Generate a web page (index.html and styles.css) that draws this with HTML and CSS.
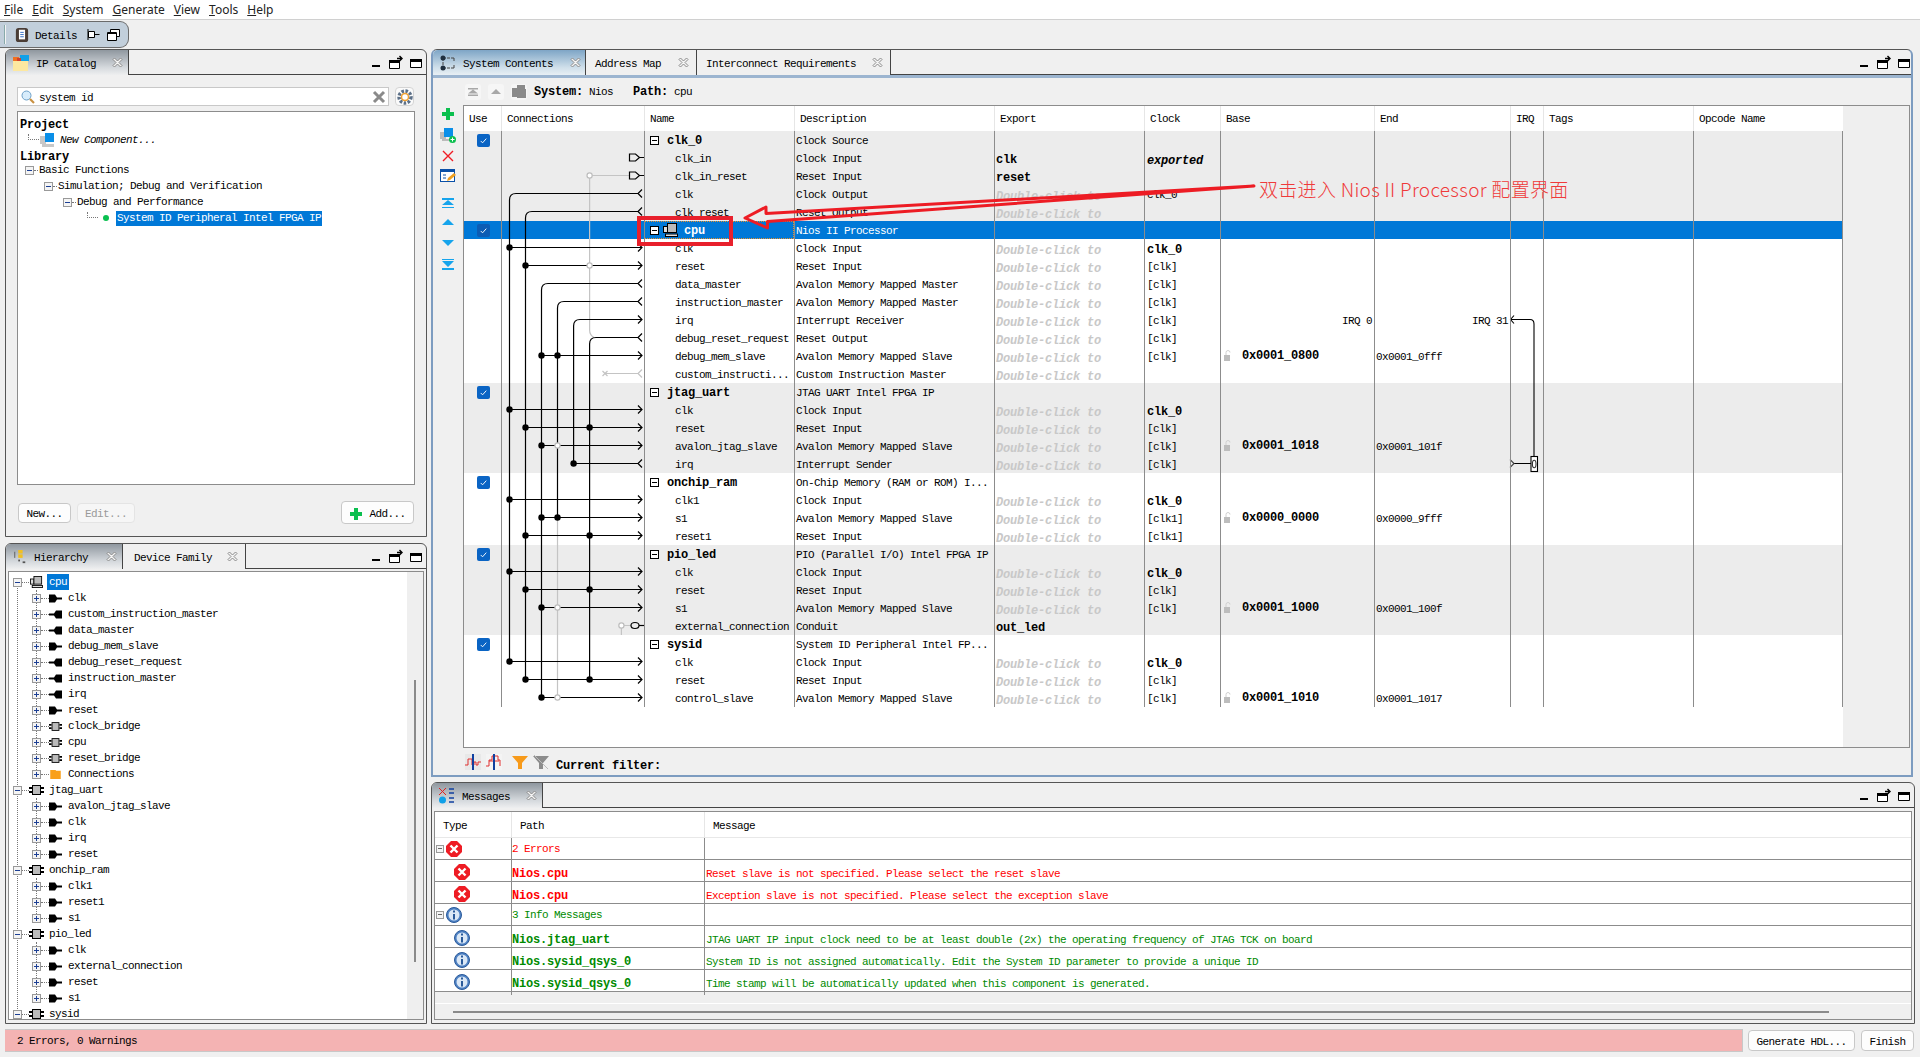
FILE: index.html
```html
<!DOCTYPE html>
<html lang="en">
<head>
<meta charset="utf-8">
<title>Platform Designer</title>
<link rel="stylesheet" href="styles.css">
</head>
<body>
<svg class="sprite" aria-hidden="true">
  <symbol id="winctl" viewBox="0 0 50 14"><rect x="0" y="10" width="8" height="2"/><path d="M17.5 6.500h10v7h-10z" fill="#fff" stroke="#000"/><rect x="17" y="5" width="11" height="3"/><path d="M25 3.500h4M27.500 1l2.500 2.500-2.500 2.500" fill="none" stroke="#000" stroke-width="1.400"/><path d="M38.500 4.500h11v8h-11z" fill="#fff" stroke="#000"/><rect x="38" y="4" width="12" height="3"/></symbol>
  <symbol id="close" viewBox="0 0 11 11"><path d="M1 2.500 2.500 1l3 3 3-3L10 2.500l-3 3 3 3L8.500 10l-3-3-3 3L1 8.500l3-3z" fill="#f4f4f4" stroke="#8a8a8a"/></symbol>
  <symbol id="pin" viewBox="0 0 13 13"><path d="M1.500 3.500h6v6h-6zM7.500 6.500h5" fill="#fff" stroke="#000"/><path d="M1 1v11" stroke="#000"/></symbol>
  <symbol id="restore" viewBox="0 0 13 13"><path d="M3.500 1.500h9v7h-9z" fill="#fff" stroke="#000"/><path d="M.5 4.500h9v8h-9z" fill="#fff" stroke="#000"/><path d="M1 5h8" stroke="#000" stroke-width="2"/></symbol>
  <symbol id="details" viewBox="0 0 14 16"><rect x="0" y="0" width="14" height="16" rx="3" fill="#4a3d36"/><rect x="3.500" y="2" width="7" height="11" fill="#fff"/><path d="M5 5h4M5 7.500h4M5 10h4" stroke="#2060c0"/></symbol>
  <symbol id="catalog" viewBox="0 0 16 16"><rect x="0" y="2" width="6" height="8" fill="#f07020"/><rect x="7" y="0" width="9" height="6" fill="#10a0e8"/><rect x="4" y="3" width="4" height="4" fill="#d04030"/><rect x="0" y="6" width="15" height="10" fill="#fde8a0"/></symbol>
  <symbol id="hier" viewBox="0 0 14 16"><path d="M1 2v7" stroke="#555" fill="none"/><rect x="5" y="0" width="5" height="4" fill="#f2c020"/><rect x="5" y="5" width="5" height="4" fill="#f2c020"/><rect x="5" y="11" width="2" height="2" fill="#555"/><rect x="10" y="13" width="3" height="2" fill="#555"/></symbol>
  <symbol id="sys" viewBox="0 0 16 16"><path d="M3 3h11M3 13h11M3 3v10M14 3v3M14 10v3" fill="none" stroke="#444" stroke-dasharray="3 1"/><circle cx="3" cy="3" r="2.500" fill="#203040"/><circle cx="3" cy="13" r="2.500" fill="#203040"/></symbol>
  <symbol id="msgs" viewBox="0 0 16 16"><path d="M0 0l7 7M7 0L0 7" stroke="#e02020" fill="none"/><path d="M10 1h5M10 5h5M10 10h5M10 14h5" stroke="#1040a0" stroke-width="1.500"/><circle cx="3.500" cy="12" r="3.500" fill="#10a0e8"/></symbol>
  <symbol id="plugin" viewBox="0 0 13 8"><path d="M0 0h6l2 3h5v2H8L6 8H0z"/></symbol>
  <symbol id="plugout" viewBox="0 0 13 8"><path d="M13 0H7L5 3H0v2h5l2 3h6z"/></symbol>
  <symbol id="comp" viewBox="0 0 15 10"><rect x="3.500" y=".5" width="8" height="9" fill="#bbb" stroke="#000"/><path d="M0 2h3v2H0zM0 6h3v2H0zM12 2h3v2h-3zM12 6h3v2h-3z"/></symbol>
  <symbol id="cpuic" viewBox="0 0 15 14"><rect x=".5" y="3.500" width="4" height="6" fill="#ddd" stroke="#000"/><rect x="4.500" y=".5" width="9" height="9" fill="#bbb" stroke="#000"/><rect x="2.500" y="11" width="12" height="2.500" fill="#ddd" stroke="#000"/></symbol>
  <symbol id="folder" viewBox="0 0 14 12"><path d="M0 0h7l1 1h6v11H0z" fill="#f9a01b"/></symbol>
  <symbol id="newc" viewBox="0 0 15 15"><rect x="0" y="3" width="6" height="8" fill="#c8c8c8"/><rect x="5" y="0" width="9" height="9" fill="#0a8fe8"/><rect x="2" y="11" width="12" height="3" fill="#c8c8c8"/></symbol>
  <symbol id="search" viewBox="0 0 14 14"><circle cx="5.500" cy="5.500" r="4.500" fill="#d7ecfb" stroke="#6da0c8"/><path d="M9 9l4 4" stroke="#c89040" stroke-width="2.200"/></symbol>
  <symbol id="clear" viewBox="0 0 14 14"><path d="M2 2l10 10M12 2L2 12" stroke="#8a8a8a" stroke-width="3"/></symbol>
  <symbol id="gear" viewBox="0 0 16 16"><circle cx="8" cy="8" r="6" fill="none" stroke="#5c7088" stroke-width="3.400" stroke-dasharray="2.500 1.500"/><circle cx="8" cy="8" r="3.500" fill="#fff" stroke="#f0a030" stroke-width="1.500"/></symbol>
  <symbol id="plus" viewBox="0 0 14 14"><path d="M5 1h4v4h4v4H9v4H5V9H1V5h4z" fill="#0bbf4e"/></symbol>
  <symbol id="addc" viewBox="0 0 16 16"><rect x="0" y="5" width="6" height="7" fill="#bbb"/><rect x="4" y="1" width="9" height="9" fill="#0a8fe8"/><rect x="2" y="12" width="9" height="2" fill="#bbb"/><circle cx="12.500" cy="12.500" r="3.500" fill="#0bbf4e"/><path d="M10.500 12.500h4M12.500 10.500v4" stroke="#fff"/></symbol>
  <symbol id="del" viewBox="0 0 14 14"><path d="M2 2l10 10M12 2L2 12" stroke="#f01c24" stroke-width="1.400"/></symbol>
  <symbol id="edit" viewBox="0 0 16 16"><rect x=".5" y="1.500" width="14" height="12" fill="#fff" stroke="#0a50a8"/><rect x="0" y="1" width="15" height="3" fill="#0a50a8"/><path d="M3 7h3M3 10h3" stroke="#0a50a8"/><path d="M7 13l1-3 6-5 2 2-6 5z" fill="#f0a020"/></symbol>
  <symbol id="top" viewBox="0 0 14 14"><path d="M1 2h12v2H1zM7 4l6 5H1zM1 11h12v1H1z" fill="#16a4ec"/></symbol>
  <symbol id="up" viewBox="0 0 14 14"><path d="M7 3l6 6H1z" fill="#16a4ec"/></symbol>
  <symbol id="down" viewBox="0 0 14 14"><path d="M1 4h12l-6 6z" fill="#16a4ec"/></symbol>
  <symbol id="bottom" viewBox="0 0 14 14"><path d="M1 2h12v1H1zM1 4h12L7 10zM1 11h12v2H1z" fill="#16a4ec"/></symbol>
  <symbol id="gtop" viewBox="0 0 14 14"><path d="M2 3h10v1.500H2zM7 4.500l5 4H2zM2 9.500h10V11H2z" fill="#a8a8a8"/></symbol>
  <symbol id="gup" viewBox="0 0 14 14"><path d="M7 4l5 5H2z" fill="#a8a8a8"/></symbol>
  <symbol id="gsys" viewBox="0 0 16 16"><path d="M1 4h5V1h8v4h1v9H6v-1H1z" fill="#8a8a8a"/></symbol>
  <symbol id="wave1" viewBox="0 0 16 16"><rect width="16" height="16" fill="#e8e8e8"/><path d="M0 11h3V5h4v6h2V8h2v3h2V8h3" fill="none" stroke="#e03030"/><path d="M8 0v16" stroke="#1040a0" stroke-width="2"/></symbol>
  <symbol id="wave2" viewBox="0 0 16 16"><rect width="16" height="16" fill="#f4f4f4"/><path d="M0 12h3V6h3V2h6v4h2v6" fill="none" stroke="#e03030"/><path d="M3 7h5M8 7h5" stroke="#e03030"/><path d="M8 0v16" stroke="#1040a0" stroke-width="2"/></symbol>
  <symbol id="funnel" viewBox="0 0 16 16"><path d="M0 2h16l-6 7v6H6V9z" fill="#f79a1a"/></symbol>
  <symbol id="gfunnel" viewBox="0 0 16 16"><path d="M0 2h16l-6 7v6H6V9z" fill="#8c8c8c"/><path d="M1 1l14 14" stroke="#bbb"/></symbol>
  <symbol id="err" viewBox="0 0 16 16"><path d="M5 0h6l5 5v6l-5 5H5l-5-5V5z" fill="#ee1c24"/><path d="M4.500 4.500l7 7M11.500 4.500l-7 7" stroke="#fff" stroke-width="2.400"/></symbol>
  <symbol id="info" viewBox="0 0 16 16"><circle cx="8" cy="8" r="7.500" fill="#4f82c4" stroke="#2a5a9a"/><circle cx="8" cy="8" r="5.500" fill="#dbe8f6"/><path d="M7 3.500h2v2H7zM7 7h2v5.500H7z" fill="#2a5a9a"/></symbol>
  <symbol id="chk" viewBox="0 0 14 14"><path d="M4 7.500l2 2 4-4.500" fill="none" stroke="#fff"/></symbol>
  <symbol id="lock" viewBox="0 0 8 11"><rect x="0" y="5" width="6" height="6" fill="#bdbdbd"/><path d="M2 5V2.500a2 2 0 0 1 4 0" fill="none" stroke="#d0d0d0"/></symbol>
  <g id="ar"><path d="M-4-4 0 0-4 4" fill="none"/></g>
  <g id="al"><path d="M0-4-4 0 0 4" fill="none"/></g>
</svg>

<div class="app">
  <nav class="menubar">
    <span class="menu"><u>F</u>ile</span><span class="menu"><u>E</u>dit</span><span class="menu"><u>S</u>ystem</span><span class="menu"><u>G</u>enerate</span><span class="menu"><u>V</u>iew</span><span class="menu"><u>T</u>ools</span><span class="menu"><u>H</u>elp</span>
  </nav>

  <div class="detailbar">
    <div class="detailtab">
      <i class="grip"></i>
      <svg class="ic14"><use href="#details"/></svg>
      <span class="dtext">Details</span>
      <svg class="ic13"><use href="#pin"/></svg>
      <svg class="ic13"><use href="#restore"/></svg>
    </div>
  </div>

  <main class="main">
    <div class="leftcol">
      <section class="panel catalog">
        <div class="tabs">
          <div class="tab on t123"><svg class="ic16"><use href="#catalog"/></svg><span class="tt">IP Catalog</span><svg class="cl"><use href="#close"/></svg></div>
          <svg class="winctl"><use href="#winctl"/></svg>
        </div>
        <div class="cat-body">
          <div class="searchrow">
            <div class="search"><svg class="ic14"><use href="#search"/></svg><span class="stext">system id</span><svg class="ic14 clr"><use href="#clear"/></svg></div>
            <div class="gearbtn"><svg class="ic16"><use href="#gear"/></svg></div>
          </div>
          <div class="iptree">
            <div class="ip-r ip0"><b>Project</b></div>
            <div class="ip-r ipn"><i class="hdot"></i><svg class="ic15"><use href="#newc"/></svg><em>New Component...</em></div>
            <div class="ip-r ip0"><b>Library</b></div>
            <div class="ip-r ip1 tight"><i class="tgl m"></i><i class="hd2"></i>Basic Functions</div>
            <div class="ip-r ip2"><i class="tgl m"></i><i class="hd2"></i>Simulation; Debug and Verification</div>
            <div class="ip-r ip3"><i class="tgl m"></i><i class="hd2"></i>Debug and Performance</div>
            <div class="ip-r ip4"><i class="hdot"></i><i class="bullet"></i><span class="picked">System ID Peripheral Intel FPGA IP</span></div>
          </div>
          <div class="btnrow">
            <button class="btn bnew">New...</button>
            <button class="btn bedit">Edit...</button>
            <button class="btn badd"><svg class="ic14"><use href="#plus"/></svg>Add...</button>
          </div>
        </div>
      </section>

      <section class="panel hier">
        <div class="tabs">
          <div class="tab on t117"><svg class="ic14"><use href="#hier"/></svg><span class="tt">Hierarchy</span><svg class="cl"><use href="#close"/></svg></div>
          <div class="tab t123b"><span class="tt">Device Family</span><svg class="cl"><use href="#close"/></svg></div>
          <svg class="winctl"><use href="#winctl"/></svg>
        </div>
        <div class="hierbody">
          <div class="treebox">
            <div class="tree">
              <div class="n0"><i class="tgl m"></i><i class="hd0"></i><svg class="ic-c"><use href="#cpuic"/></svg><span class="picked pk2">cpu</span></div>
              <div class="kids">
                <div class="n1"><i class="tgl p"></i><i class="hd1"></i><svg class="ic-p"><use href="#plugin"/></svg>clk</div>
                <div class="n1"><i class="tgl p"></i><i class="hd1"></i><svg class="ic-p"><use href="#plugout"/></svg>custom_instruction_master</div>
                <div class="n1"><i class="tgl p"></i><i class="hd1"></i><svg class="ic-p"><use href="#plugout"/></svg>data_master</div>
                <div class="n1"><i class="tgl p"></i><i class="hd1"></i><svg class="ic-p"><use href="#plugin"/></svg>debug_mem_slave</div>
                <div class="n1"><i class="tgl p"></i><i class="hd1"></i><svg class="ic-p"><use href="#plugout"/></svg>debug_reset_request</div>
                <div class="n1"><i class="tgl p"></i><i class="hd1"></i><svg class="ic-p"><use href="#plugout"/></svg>instruction_master</div>
                <div class="n1"><i class="tgl p"></i><i class="hd1"></i><svg class="ic-p"><use href="#plugout"/></svg>irq</div>
                <div class="n1"><i class="tgl p"></i><i class="hd1"></i><svg class="ic-p"><use href="#plugin"/></svg>reset</div>
                <div class="n1"><i class="tgl p"></i><i class="hd1"></i><svg class="ic-p"><use href="#comp"/></svg>clock_bridge</div>
                <div class="n1"><i class="tgl p"></i><i class="hd1"></i><svg class="ic-p"><use href="#comp"/></svg>cpu</div>
                <div class="n1"><i class="tgl p"></i><i class="hd1"></i><svg class="ic-p"><use href="#comp"/></svg>reset_bridge</div>
                <div class="n1"><i class="tgl p"></i><i class="hd1"></i><svg class="ic-p"><use href="#folder"/></svg>Connections</div>
              </div>
              <div class="n0"><i class="tgl m"></i><i class="hd0"></i><svg class="ic-c"><use href="#comp"/></svg>jtag_uart</div>
              <div class="kids">
                <div class="n1"><i class="tgl p"></i><i class="hd1"></i><svg class="ic-p"><use href="#plugin"/></svg>avalon_jtag_slave</div>
                <div class="n1"><i class="tgl p"></i><i class="hd1"></i><svg class="ic-p"><use href="#plugin"/></svg>clk</div>
                <div class="n1"><i class="tgl p"></i><i class="hd1"></i><svg class="ic-p"><use href="#plugin"/></svg>irq</div>
                <div class="n1"><i class="tgl p"></i><i class="hd1"></i><svg class="ic-p"><use href="#plugin"/></svg>reset</div>
              </div>
              <div class="n0"><i class="tgl m"></i><i class="hd0"></i><svg class="ic-c"><use href="#comp"/></svg>onchip_ram</div>
              <div class="kids">
                <div class="n1"><i class="tgl p"></i><i class="hd1"></i><svg class="ic-p"><use href="#plugin"/></svg>clk1</div>
                <div class="n1"><i class="tgl p"></i><i class="hd1"></i><svg class="ic-p"><use href="#plugin"/></svg>reset1</div>
                <div class="n1"><i class="tgl p"></i><i class="hd1"></i><svg class="ic-p"><use href="#plugin"/></svg>s1</div>
              </div>
              <div class="n0"><i class="tgl m"></i><i class="hd0"></i><svg class="ic-c"><use href="#comp"/></svg>pio_led</div>
              <div class="kids">
                <div class="n1"><i class="tgl p"></i><i class="hd1"></i><svg class="ic-p"><use href="#plugin"/></svg>clk</div>
                <div class="n1"><i class="tgl p"></i><i class="hd1"></i><svg class="ic-p"><use href="#plugin"/></svg>external_connection</div>
                <div class="n1"><i class="tgl p"></i><i class="hd1"></i><svg class="ic-p"><use href="#plugin"/></svg>reset</div>
                <div class="n1"><i class="tgl p"></i><i class="hd1"></i><svg class="ic-p"><use href="#plugin"/></svg>s1</div>
              </div>
              <div class="n0"><i class="tgl m"></i><i class="hd0"></i><svg class="ic-c"><use href="#comp"/></svg>sysid</div>
            </div>
            <div class="vscroll"><i class="thumb"></i></div>
          </div>
        </div>
      </section>
    </div>

    <div class="rightcol">
      <section class="panel sysp">
        <div class="tabs">
          <div class="tab onb t153"><svg class="ic16"><use href="#sys"/></svg><span class="tt">System Contents</span><svg class="cl"><use href="#close"/></svg></div>
          <div class="tab t111"><span class="tt">Address Map</span><svg class="cl"><use href="#close"/></svg></div>
          <div class="tab t194"><span class="tt">Interconnect Requirements</span><svg class="cl"><use href="#close"/></svg></div>
          <svg class="winctl"><use href="#winctl"/></svg>
        </div>
        <div class="bluebar"></div>
        <div class="crumbs">
          <span class="cbtn"><svg class="ic14"><use href="#gtop"/></svg></span>
          <span class="cbtn"><svg class="ic14"><use href="#gup"/></svg></span>
          <span class="cbtn"><svg class="ic16"><use href="#gsys"/></svg></span>
          <span class="crumbtxt"><b>System:</b> Nios</span>
          <span class="crumbtxt pth"><b>Path:</b> cpu</span>
        </div>
        <div class="sysmain">
          <div class="side">
            <svg class="ic14"><use href="#plus"/></svg>
            <svg class="ic16 g2"><use href="#addc"/></svg>
            <svg class="ic14 g4"><use href="#del"/></svg>
            <svg class="ic16 g5"><use href="#edit"/></svg>
            <svg class="ic14 g11"><use href="#top"/></svg>
            <svg class="ic14 g6"><use href="#up"/></svg>
            <svg class="ic14 g6"><use href="#down"/></svg>
            <svg class="ic14 g7"><use href="#bottom"/></svg>
          </div>
          <div class="tablebox">
            <div class="tbl">
              <div class="thead">
                <span class="th th-use">Use</span><span class="th">Connections</span><span class="th">Name</span><span class="th">Description</span><span class="th">Export</span><span class="th">Clock</span><span class="th">Base</span><span class="th">End</span><span class="th">IRQ</span><span class="th">Tags</span><span class="th">Opcode Name</span>
              </div>
              <div class="rows">
                <div class="row g"><span class="use"><svg class="cb"><use href="#chk"/></svg></span><span class="nm grp"><i class="tg"></i>clk_0</span><span class="ds">Clock Source</span></div>
                <div class="row g"><span class="nm">clk_in</span><span class="ds">Clock Input</span><span class="ex bd">clk</span><span class="ck bdi">exported</span></div>
                <div class="row g"><span class="nm">clk_in_reset</span><span class="ds">Reset Input</span><span class="ex bd">reset</span></div>
                <div class="row g"><span class="nm">clk</span><span class="ds">Clock Output</span><span class="ex dc">Double-click to</span><span class="ck">clk_0</span></div>
                <div class="row g"><span class="nm">clk_reset</span><span class="ds">Reset Output</span><span class="ex dc">Double-click to</span></div>
                <div class="row sel"><span class="use"><svg class="cb"><use href="#chk"/></svg></span><span class="nm grp"><i class="tg"></i><svg class="ic-cpu"><use href="#cpuic"/></svg>cpu</span><span class="ds">Nios II Processor</span></div>
                <div class="row"><span class="nm">clk</span><span class="ds">Clock Input</span><span class="ex dc">Double-click to</span><span class="ck bd">clk_0</span></div>
                <div class="row"><span class="nm">reset</span><span class="ds">Reset Input</span><span class="ex dc">Double-click to</span><span class="ck">[clk]</span></div>
                <div class="row"><span class="nm">data_master</span><span class="ds">Avalon Memory Mapped Master</span><span class="ex dc">Double-click to</span><span class="ck">[clk]</span></div>
                <div class="row"><span class="nm">instruction_master</span><span class="ds">Avalon Memory Mapped Master</span><span class="ex dc">Double-click to</span><span class="ck">[clk]</span></div>
                <div class="row"><span class="nm">irq</span><span class="ds">Interrupt Receiver</span><span class="ex dc">Double-click to</span><span class="ck">[clk]</span><span class="irq0">IRQ 0</span><span class="irq31">IRQ 31</span></div>
                <div class="row"><span class="nm">debug_reset_request</span><span class="ds">Reset Output</span><span class="ex dc">Double-click to</span><span class="ck">[clk]</span></div>
                <div class="row"><span class="nm">debug_mem_slave</span><span class="ds">Avalon Memory Mapped Slave</span><span class="ex dc">Double-click to</span><span class="ck">[clk]</span><span class="bs"><svg class="ic-lock"><use href="#lock"/></svg><b>0x0001_0800</b></span><span class="en">0x0001_0fff</span></div>
                <div class="row"><span class="nm">custom_instructi...</span><span class="ds">Custom Instruction Master</span><span class="ex dc">Double-click to</span></div>
                <div class="row g"><span class="use"><svg class="cb"><use href="#chk"/></svg></span><span class="nm grp"><i class="tg"></i>jtag_uart</span><span class="ds">JTAG UART Intel FPGA IP</span></div>
                <div class="row g"><span class="nm">clk</span><span class="ds">Clock Input</span><span class="ex dc">Double-click to</span><span class="ck bd">clk_0</span></div>
                <div class="row g"><span class="nm">reset</span><span class="ds">Reset Input</span><span class="ex dc">Double-click to</span><span class="ck">[clk]</span></div>
                <div class="row g"><span class="nm">avalon_jtag_slave</span><span class="ds">Avalon Memory Mapped Slave</span><span class="ex dc">Double-click to</span><span class="ck">[clk]</span><span class="bs"><svg class="ic-lock"><use href="#lock"/></svg><b>0x0001_1018</b></span><span class="en">0x0001_101f</span></div>
                <div class="row g"><span class="nm">irq</span><span class="ds">Interrupt Sender</span><span class="ex dc">Double-click to</span><span class="ck">[clk]</span></div>
                <div class="row"><span class="use"><svg class="cb"><use href="#chk"/></svg></span><span class="nm grp"><i class="tg"></i>onchip_ram</span><span class="ds">On-Chip Memory (RAM or ROM) I...</span></div>
                <div class="row"><span class="nm">clk1</span><span class="ds">Clock Input</span><span class="ex dc">Double-click to</span><span class="ck bd">clk_0</span></div>
                <div class="row"><span class="nm">s1</span><span class="ds">Avalon Memory Mapped Slave</span><span class="ex dc">Double-click to</span><span class="ck">[clk1]</span><span class="bs"><svg class="ic-lock"><use href="#lock"/></svg><b>0x0000_0000</b></span><span class="en">0x0000_9fff</span></div>
                <div class="row"><span class="nm">reset1</span><span class="ds">Reset Input</span><span class="ex dc">Double-click to</span><span class="ck">[clk1]</span></div>
                <div class="row g"><span class="use"><svg class="cb"><use href="#chk"/></svg></span><span class="nm grp"><i class="tg"></i>pio_led</span><span class="ds">PIO (Parallel I/O) Intel FPGA IP</span></div>
                <div class="row g"><span class="nm">clk</span><span class="ds">Clock Input</span><span class="ex dc">Double-click to</span><span class="ck bd">clk_0</span></div>
                <div class="row g"><span class="nm">reset</span><span class="ds">Reset Input</span><span class="ex dc">Double-click to</span><span class="ck">[clk]</span></div>
                <div class="row g"><span class="nm">s1</span><span class="ds">Avalon Memory Mapped Slave</span><span class="ex dc">Double-click to</span><span class="ck">[clk]</span><span class="bs"><svg class="ic-lock"><use href="#lock"/></svg><b>0x0001_1000</b></span><span class="en">0x0001_100f</span></div>
                <div class="row g"><span class="nm">external_connection</span><span class="ds">Conduit</span><span class="ex bd">out_led</span></div>
                <div class="row"><span class="use"><svg class="cb"><use href="#chk"/></svg></span><span class="nm grp"><i class="tg"></i>sysid</span><span class="ds">System ID Peripheral Intel FP...</span></div>
                <div class="row"><span class="nm">clk</span><span class="ds">Clock Input</span><span class="ex dc">Double-click to</span><span class="ck bd">clk_0</span></div>
                <div class="row"><span class="nm">reset</span><span class="ds">Reset Input</span><span class="ex dc">Double-click to</span><span class="ck">[clk]</span></div>
                <div class="row"><span class="nm">control_slave</span><span class="ds">Avalon Memory Mapped Slave</span><span class="ex dc">Double-click to</span><span class="ck">[clk]</span><span class="bs"><svg class="ic-lock"><use href="#lock"/></svg><b>0x0001_1010</b></span><span class="en">0x0001_1017</span></div>

                <svg class="conn" viewBox="501 131 144 576">
                  <g fill="none" stroke="#c4c4c4" stroke-width="1.200">
                    <path d="M589.600 175.500V330Q589.600 335 594 337.500M557.500 517.500V697.500M589.600 175.500H629M605 373.500H638"/>
                    <path d="M602.500 371l5 5M607.500 371l-5 5M621.400 625.500H631M621.400 625.500V635"/>
                    <use href="#al" x="642" y="373.500"/>
                  </g>
                  <g fill="none" stroke="#000" stroke-width="1.200">
                    <path d="M638 193.500H516Q509.500 193.500 509.500 200V661.500M638 211.500H532Q525.500 211.500 525.500 218V679.500M638 283.500H548Q541.500 283.500 541.500 290V697.500M638 301.500H564Q557.500 301.500 557.500 308V517.500M642 319.500H580Q573.600 319.500 573.600 326V463.500H638M638 337.500H596Q589.600 337.500 589.600 344V679.500"/>
                    <path d="M509.500 247.500H642M525.500 265.500H642M541.500 355.500H642M509.500 409.500H642M525.500 427.500H642M541.500 445.500H642M509.500 499.500H642M541.500 517.500H642M525.500 535.500H642M509.500 571.500H642M525.500 589.500H642M541.500 607.500H642M509.500 661.500H642M525.500 679.500H642M541.500 697.500H642"/>
                    <path d="M629.500 154h6l4 3.500-4 3.500h-6zM639.500 157.500H644M629.500 172h6l4 3.500-4 3.500h-6zM639.500 175.500H644"/>
                    <ellipse cx="635" cy="625.500" rx="4" ry="3"/><path d="M639 625.500H644"/>
                    <use href="#al" x="642" y="193.500"/><use href="#al" x="642" y="211.500"/><use href="#al" x="642" y="283.500"/><use href="#al" x="642" y="301.500"/><use href="#al" x="642" y="337.500"/><use href="#al" x="642" y="463.500"/>
                    <use href="#ar" x="642" y="247.500"/><use href="#ar" x="642" y="265.500"/><use href="#ar" x="642" y="319.500"/><use href="#ar" x="642" y="355.500"/><use href="#ar" x="642" y="409.500"/><use href="#ar" x="642" y="427.500"/><use href="#ar" x="642" y="445.500"/><use href="#ar" x="642" y="499.500"/><use href="#ar" x="642" y="517.500"/><use href="#ar" x="642" y="535.500"/><use href="#ar" x="642" y="571.500"/><use href="#ar" x="642" y="589.500"/><use href="#ar" x="642" y="607.500"/><use href="#ar" x="642" y="661.500"/><use href="#ar" x="642" y="679.500"/><use href="#ar" x="642" y="697.500"/>
                  </g>
                  <g fill="#000">
                    <circle cx="509.500" cy="247.500" r="3.200"/><circle cx="525.500" cy="265.500" r="3.200"/><circle cx="541.500" cy="355.500" r="3.200"/><circle cx="557.500" cy="355.500" r="3.200"/>
                    <circle cx="509.500" cy="409.500" r="3.200"/><circle cx="525.500" cy="427.500" r="3.200"/><circle cx="589.600" cy="427.500" r="3.200"/><circle cx="541.500" cy="445.500" r="3.200"/><circle cx="573.600" cy="463.500" r="3.200"/>
                    <circle cx="509.500" cy="499.500" r="3.200"/><circle cx="541.500" cy="517.500" r="3.200"/><circle cx="557.500" cy="517.500" r="3.200"/><circle cx="525.500" cy="535.500" r="3.200"/><circle cx="589.600" cy="535.500" r="3.200"/>
                    <circle cx="509.500" cy="571.500" r="3.200"/><circle cx="525.500" cy="589.500" r="3.200"/><circle cx="589.600" cy="589.500" r="3.200"/><circle cx="541.500" cy="607.500" r="3.200"/>
                    <circle cx="509.500" cy="661.500" r="3.200"/><circle cx="525.500" cy="679.500" r="3.200"/><circle cx="589.600" cy="679.500" r="3.200"/><circle cx="541.500" cy="697.500" r="3.200"/>
                  </g>
                  <g fill="#fff" stroke="#bdbdbd" stroke-width="1.200">
                    <circle cx="589.600" cy="175.500" r="2.600"/><circle cx="589.600" cy="265.500" r="2.600"/><circle cx="557.500" cy="445.500" r="2.600"/><circle cx="557.500" cy="607.500" r="2.600"/><circle cx="557.500" cy="697.500" r="2.600"/><circle cx="621.400" cy="625.500" r="2.600"/>
                  </g>
                </svg>

                <svg class="irqw" viewBox="1510 131 33 576">
                  <g fill="none" stroke="#000" stroke-width="1.100">
                    <path d="M1514 315.500 1510.500 319.500 1514 323.500M1510.500 319.500H1530Q1534 319.500 1534 324V457M1513 463.500H1531"/>
                    <path d="M1510 459.500 1514 463.500 1510 467.500" stroke="#444"/>
                    <rect x="1531" y="456.500" width="6.500" height="15" fill="#fff"/>
                    <ellipse cx="1534.200" cy="464" rx="1.800" ry="3.800" stroke="#333"/>
                  </g>
                </svg>
              </div>
            </div>
          </div>
        </div>
        <div class="filterbar">
          <svg class="ic16"><use href="#wave1"/></svg>
          <svg class="ic16"><use href="#wave2"/></svg>
          <svg class="ic16 g10"><use href="#funnel"/></svg>
          <svg class="ic16 g5"><use href="#gfunnel"/></svg>
          <b class="fltext">Current filter:</b>
        </div>
      </section>

      <section class="panel msgp">
        <div class="tabs">
          <div class="tab on t111m"><svg class="ic16"><use href="#msgs"/></svg><span class="tt">Messages</span><svg class="cl"><use href="#close"/></svg></div>
          <svg class="winctl"><use href="#winctl"/></svg>
        </div>
        <div class="msgbody">
          <div class="msgbox">
            <div class="mhead"><span>Type</span><span>Path</span><span>Message</span></div>
            <div class="mrow red grp1"><span class="mt"><i class="tgl m small"></i><svg class="ic16"><use href="#err"/></svg></span><span class="mp">2 Errors</span><span class="mm"></span></div>
            <div class="mrow red"><span class="mt kid"><svg class="ic16"><use href="#err"/></svg></span><span class="mp bold">Nios.cpu</span><span class="mm">Reset slave is not specified. Please select the reset slave</span></div>
            <div class="mrow red"><span class="mt kid"><svg class="ic16"><use href="#err"/></svg></span><span class="mp bold">Nios.cpu</span><span class="mm">Exception slave is not specified. Please select the exception slave</span></div>
            <div class="mrow grn"><span class="mt"><i class="tgl m small"></i><svg class="ic16"><use href="#info"/></svg></span><span class="mp">3 Info Messages</span><span class="mm"></span></div>
            <div class="mrow grn"><span class="mt kid"><svg class="ic16"><use href="#info"/></svg></span><span class="mp bold">Nios.jtag_uart</span><span class="mm">JTAG UART IP input clock need to be at least double (2x) the operating frequency of JTAG TCK on board</span></div>
            <div class="mrow grn"><span class="mt kid"><svg class="ic16"><use href="#info"/></svg></span><span class="mp bold">Nios.sysid_qsys_0</span><span class="mm">System ID is not assigned automatically. Edit the System ID parameter to provide a unique ID</span></div>
            <div class="mrow grn"><span class="mt kid"><svg class="ic16"><use href="#info"/></svg></span><span class="mp bold">Nios.sysid_qsys_0</span><span class="mm">Time stamp will be automatically updated when this component is generated.</span></div>
            <div class="mfoot"><i class="hthumb"></i></div>
          </div>
        </div>
      </section>
    </div>
  </main>

  <footer class="statusrow">
    <div class="status">2 Errors, 0 Warnings</div>
    <button class="btn bgen">Generate HDL...</button>
    <button class="btn bfin">Finish</button>
  </footer>

  <svg class="overlay" viewBox="0 0 1920 1057" aria-hidden="true">
    <rect x="639" y="218" width="92" height="26" fill="none" stroke="#e8202c" stroke-width="4"/>
    <path d="M1254 186 766 213.500 766 207 745 218 767.500 228 767.500 221.500Z" fill="none" stroke="#ed1c24" stroke-width="3" stroke-linejoin="round"/>
  </svg>
  <div class="note">双击进入 Nios II Processor 配置界面</div>
</div>
</body>
</html>
```
FILE: styles.css
```css
* { box-sizing: border-box; }
html, body { margin: 0; padding: 0; }
body {
  width: 1920px; height: 1057px; overflow: hidden; background: #f0f0f0; color: #000;
  font: 11px/16px "Liberation Mono", "Noto Sans CJK SC", monospace;
  letter-spacing: -0.6px;
}
b, .bold, .bd, .bdi, .dc, .grp { font-size: 12px; font-weight: bold; letter-spacing: -0.2px; }
.sprite { display: none; }
svg { display: block; flex: none; }
.ic13 { width: 13px; height: 13px; }
.ic14 { width: 14px; height: 14px; }
.ic15 { width: 15px; height: 15px; }
.ic16 { width: 16px; height: 16px; }

.app { position: relative; width: 1920px; height: 1057px; display: flex; flex-direction: column; }

.menubar {
  height: 20px; display: flex; gap: 9px; padding-left: 4px; align-items: center; flex: none;
  background: #fff; border-bottom: 1px solid #d0d0d0;
  font: 12px/18px "Noto Sans", sans-serif; letter-spacing: 0; color: #222;
}
.detailbar { height: 27px; margin: 1px 0; flex: none; }
.detailtab {
  width: 129px; height: 27px; display: flex; align-items: center;
  background: #c2cfdb; border: 1px solid #6b6b6b; border-left: 0; border-radius: 0 9px 9px 0;
}
.grip { width: 2px; height: 19px; background: #f4f4f4; border-left: 1px solid #8aa; margin: 0 9px 0 4px; }
.dtext { margin: 0 9px 0 6px; width: 43px; padding-top: 2px; }
.detailtab .ic13 + .ic13 { margin-left: 7px; }

.main { flex: none; height: 975px; display: flex; gap: 4px; padding-left: 5px; }
.leftcol { width: 422px; display: flex; flex-direction: column; gap: 6px; }
.rightcol { width: 1484px; display: flex; flex-direction: column; gap: 5px; }
.panel {
  border: 1px solid #555; border-radius: 6px 6px 0 0; background: #f0f0f0;
  display: flex; flex-direction: column; min-height: 0;
}
.catalog { height: 488px; }
.hier { height: 481px; }
.sysp { height: 728px; margin-right: 2px; border-color: #555 #7d9cc0 #7d9cc0; border-width: 1px 2px 2px; }
.msgp { height: 242px; }

.tabs { position: relative; height: 25px; flex: none; display: flex; border-bottom: 1px solid #444; }
.tab {
  height: 25px; display: flex; align-items: center; padding: 0 7px 0 11px; flex: none;
  border-right: 1px solid #444; background: #f0f0f0;
}
.tab.on { background: linear-gradient(#8f979f, #d5d9dd 70%, #eeeff0); padding: 0 5px 0 7px; border-radius: 5px 0 0 0; }
.tab.onb { background: linear-gradient(#7ea5c6, #cfdfea 70%, #e8eff4); padding: 0 4px 0 7px; border-radius: 5px 0 0 0; }
.tab .ic16, .tab .ic14 { margin-right: 7px; }
.tt { flex: 1; white-space: nowrap; padding-top: 2px; }
.cl { width: 11px; height: 11px; }
.t123 { width: 123px; }
.t117 { width: 117px; }
.t123b { width: 123px; }
.t153 { width: 153px; }
.t111 { width: 111px; padding-left: 9px; }
.t194 { width: 194px; padding-left: 9px; }
.t111m { width: 111px; }
.winctl { position: absolute; right: 4px; top: 5px; width: 50px; height: 14px; }
.sysp .winctl { right: 1px; }

.cat-body { padding: 12px 11px 0; flex: 1; }
.searchrow { display: flex; gap: 6px; }
.search {
  width: 372px; height: 19px; display: flex; align-items: center; gap: 4px; padding: 0 2px 0 3px;
  background: #fff; border: 1px solid #c8c8c8;
}
.stext { flex: 1; padding-top: 3px; }
.gearbtn { width: 19px; height: 19px; border: 1px solid #d4d4d4; border-radius: 4px; background: #fafafa; display: flex; align-items: center; justify-content: center; }
.iptree { width: 398px; height: 374px; margin-top: 5px; background: #fff; border: 1px solid #8c8c8c; padding-top: 4px; }
.ip-r { height: 16px; display: flex; align-items: center; white-space: nowrap; position: relative; }
.ip0 { padding: 1px 0 0 2px; }
.ipn { padding-left: 10px; }
.ipn em { margin-left: 5px; }
.tight { margin-top: -2px; }
.ip1 { padding-left: 7px; }
.ip2 { padding-left: 26px; }
.ip3 { padding-left: 45px; }
.ip4 { padding-left: 69px; }
.hd2 { width: 4px; height: 1px; margin-right: 1px; border-top: 1px dotted #777; }
.hdot { width: 11px; height: 6px; margin: -6px 1px 0 0; border: 1px dotted #777; border-width: 0 0 1px 1px; }
.bullet { width: 6px; height: 6px; border-radius: 50%; background: #0ac050; margin: 0 7px 0 4px; }
.picked { background: #0078d7; color: #fff; padding: 0 1px; line-height: 15px; height: 15px; }
.pk2 { margin-left: -2px; height: 16px; line-height: 16px; padding: 0 2px; }

.tgl { position: relative; width: 9px; height: 9px; flex: none; background: #f4f4f4; border: 1px solid #999; display: block; }
.tgl::before { content: ""; position: absolute; left: 1px; top: 3px; width: 5px; height: 1px; background: #1c3f94; }
.tgl.p::after { content: ""; position: absolute; left: 3px; top: 1px; width: 1px; height: 5px; background: #1c3f94; }
.tgl.small { width: 8px; height: 8px; }
.tgl.small::before { top: 2px; width: 4px; background: #666; }

.btnrow { display: flex; align-items: center; margin-top: 16px; padding-left: 1px; }
.btn {
  font: inherit; letter-spacing: inherit; color: #000; background: #fdfdfd; padding: 2px 0 0;
  border: 1px solid #c8c8c8; border-radius: 4px; display: flex; align-items: center; justify-content: center;
}
.bnew { width: 53px; height: 20px; }
.bedit { width: 58px; height: 20px; margin-left: 6px; color: #9a9a9a; background: #f6f6f6; border-color: #e4e4e4; }
.badd { width: 73px; height: 23px; margin-left: auto; margin-right: 1px; gap: 6px; }

.hierbody { flex: 1; padding: 2px 2px 3px; min-height: 0; }
.treebox { height: 100%; border: 1px solid #8c8c8c; display: flex; }
.tree { position: relative; width: 398px; background: #fff; padding-top: 2px; overflow: hidden; }
.tree::before { content: ""; position: absolute; left: 8px; top: 16px; bottom: 0; border-left: 1px dotted #777; }
.kids { position: relative; }
.kids::before { content: ""; position: absolute; left: 27px; top: 0; bottom: 8px; border-left: 1px dotted #777; }
.n0, .n1 { position: relative; height: 16px; display: flex; align-items: center; white-space: nowrap; }
.n0 { padding-left: 4px; }
.n1 { padding-left: 23px; }
.hd0 { width: 7px; border-top: 1px dotted #777; }
.hd1 { width: 8px; border-top: 1px dotted #777; }
.ic-p { width: 13px; height: 9px; margin-right: 6px; }
.ic-c { width: 15px; height: 12px; margin-right: 5px; }
.vscroll { flex: 1; background: #efefef; padding: 108px 7px 0 7px; }
.thumb { display: block; width: 2px; height: 282px; background: #8a8a8a; }

.bluebar { height: 3px; flex: none; background: #9cb5d0; }
.crumbs { height: 27px; flex: none; display: flex; align-items: center; padding-left: 32px; }
.cbtn { width: 16px; height: 16px; margin-right: 7px; display: flex; align-items: center; justify-content: center; background: #f6f6f6; border-radius: 3px; }
.crumbtxt { white-space: nowrap; }
.pth { margin-left: 20px; }
.sysmain { flex: 1; display: flex; min-height: 0; }
.side { width: 30px; flex: none; display: flex; flex-direction: column; align-items: center; padding: 2px 0 0 0; }
.g2 { margin-top: 6px; }
.g4 { margin-top: 6px; }
.g5 { margin-top: 5px; }
.g6 { margin-top: 6px; }
.g7 { margin-top: 7px; }
.g11 { margin-top: 12px; }
.tablebox { flex: 1; margin-right: 1px; border: 1px solid #8c8c8c; background: #efefef; display: flex; min-width: 0; }
.tbl { width: 1379px; background: #fff; }
.thead, .row { display: grid; grid-template-columns: 37px 143px 150px 200px 150px 76px 154px 136px 33px 150px 150px; }
.thead { height: 25px; background: #fff; }
.th { line-height: 27px; padding-left: 5px; border-left: 1px solid #e6e6e6; white-space: nowrap; }
.th-use { border-left: 0; }

.rows { position: relative; }
.rows::after {
  content: ""; position: absolute; inset: 0; pointer-events: none;
  background-repeat: no-repeat; background-size: 1px 100%;
  background-image: linear-gradient(#8c8c8c, #8c8c8c), linear-gradient(#8c8c8c, #8c8c8c), linear-gradient(#8c8c8c, #8c8c8c), linear-gradient(#8c8c8c, #8c8c8c), linear-gradient(#8c8c8c, #8c8c8c), linear-gradient(#8c8c8c, #8c8c8c), linear-gradient(#8c8c8c, #8c8c8c), linear-gradient(#8c8c8c, #8c8c8c), linear-gradient(#8c8c8c, #8c8c8c), linear-gradient(#8c8c8c, #8c8c8c), linear-gradient(#8c8c8c, #8c8c8c);
  background-position: 37px 0, 180px 0, 330px 0, 530px 0, 680px 0, 756px 0, 910px 0, 1046px 0, 1079px 0, 1229px 0, 1378px 0;
}
.row { height: 18px; grid-template-rows: 18px; line-height: 21px; white-space: nowrap; }
.row > span { grid-row: 1; min-width: 0; }
.row.g { background: #ececec; }
.row.sel { background: #0078d7; color: #fff; }
.use { grid-column: 1; display: flex; justify-content: center; align-items: center; padding-left: 2px; }
.cb { width: 13px; height: 13px; background: #0a64c4; border-radius: 2px; }
.sel .cb { background: #0c5cb4; }
.nm { grid-column: 3; padding-left: 31px; display: flex; align-items: flex-start; }
.nm.grp { padding-left: 6px; }
.sel .nm { outline: 1px dotted #e8902a; outline-offset: -1px; }
.tg { position: relative; width: 9px; height: 9px; margin: 5px 8px 0 0; border: 1px solid #000; background: #fff; flex: none; }
.tg::before { content: ""; position: absolute; left: 1px; top: 3px; width: 5px; height: 1px; background: #000; }
.sel .tg { margin-right: 4px; }
.ic-cpu { width: 15px; height: 14px; margin: 2px 6px 0 0; }
.ds { grid-column: 4; padding-left: 2px; }
.ex { grid-column: 5; padding-left: 2px; }
.ck { grid-column: 6; padding-left: 3px; }
.bs { grid-column: 7; padding: 1px 0 0 4px; display: flex; align-items: center; }
.en { grid-column: 8; padding-left: 2px; }
.ic-lock { width: 8px; height: 11px; margin: -3px 10px 0 0; }
.bd { padding-top: 1px; }
.dc { color: #c8c8c8; font-style: italic; padding-top: 2px; }
.bdi { font-style: italic; padding-top: 2px; }
.irq0 { grid-column: 7; text-align: right; padding-right: 2px; }
.irq31 { grid-column: 8; text-align: right; padding-right: 2px; }
.conn { position: absolute; left: 37px; top: 0; width: 144px; height: 576px; }
.irqw { position: absolute; left: 1046px; top: 0; width: 33px; height: 576px; overflow: visible; }

.filterbar { height: 27px; flex: none; display: flex; align-items: center; padding-left: 32px; gap: 5px; }
.g10 { margin-left: 5px; }
.filterbar .g5 { margin-top: 0; }
.fltext { margin: 8px 0 0 2px; white-space: nowrap; }

.msgbody { flex: 1; padding: 3px 2px; min-height: 0; }
.msgbox { height: 100%; border: 1px solid #8c8c8c; background: #efefef; display: flex; flex-direction: column; }
.mhead, .mrow { display: grid; grid-template-columns: 76px 193px 1fr; background: #fff; flex: none; }
.mhead { height: 26px; line-height: 29px; border-bottom: 1px solid #e8e8e8; }
.mhead span { padding-left: 8px; border-left: 1px solid #e6e6e6; }
.mhead span:first-child { border-left: 0; }
.mrow { height: 22px; border-bottom: 1px solid #8c8c8c; line-height: 22px; white-space: nowrap; }
.mt { display: flex; align-items: center; padding-left: 1px; }
.mt .tgl { margin-right: 2px; }
.mt.kid { padding: 0 0 2px 19px; }
.mp { border-left: 1px solid #8c8c8c; padding-left: 0; }
.mm { border-left: 1px solid #8c8c8c; padding-left: 1px; }
.mp.bold, .mp.bold ~ .mm { padding-top: 3px; }
.red { color: #ff0000; }
.grn { color: #008a00; }
.mfoot { flex: 1; position: relative; }
.mfoot::before { content: ""; position: absolute; left: 0; right: 0; top: 11px; height: 1px; background: #fff; }
.hthumb { position: absolute; left: 18px; top: 19px; width: 1376px; height: 2px; background: #8a8a8a; }

.statusrow { margin-top: 5px; height: 23px; flex: none; display: flex; align-items: center; padding-left: 5px; }
.status { width: 1738px; height: 23px; line-height: 23px; padding-left: 12px; background: #f4b3b3; border: 1px solid #c8c8c8; border-width: 1px 1px 1px 0; }
.bgen { width: 107px; height: 21px; margin-left: 5px; }
.bfin { width: 53px; height: 21px; margin-left: 6px; }

.overlay { position: absolute; left: 0; top: 0; width: 1920px; height: 1057px; pointer-events: none; }
.note {
  position: absolute; left: 1259px; top: 176px; white-space: nowrap; color: #ef3a3a;
  font: 300 19px/26px "Noto Sans CJK SC", "Noto Sans", sans-serif; letter-spacing: .3px;
}
```
